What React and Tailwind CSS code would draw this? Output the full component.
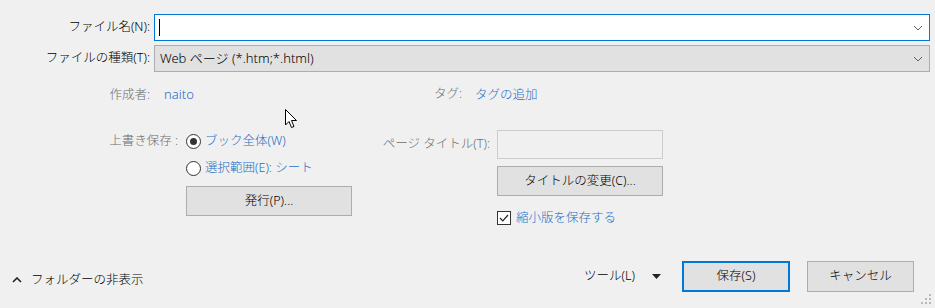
import React from 'react';

const font = "font-['Noto_Sans','Noto_Sans_CJK_JP',sans-serif] font-light";

function Chevron() {
  return (
    <svg width="10" height="6" viewBox="0 0 10 6" className="shrink-0">
      <path d="M1 1 L5 5 L9 1" fill="none" stroke="#606060" strokeWidth="1" />
    </svg>
  );
}

function Radio({ checked }) {
  return (
    <span className="w-[15px] h-[15px] rounded-full border border-[#333] bg-white flex items-center justify-center shrink-0">
      {checked && <span className="w-[7px] h-[7px] rounded-full bg-[#333]" />}
    </span>
  );
}

function Checkbox() {
  return (
    <span className="w-[14px] h-[14px] border border-[#333] bg-white flex items-center justify-center shrink-0">
      <svg width="10" height="8" viewBox="0 0 10 8">
        <path d="M1 4 L3.8 6.8 L9 1" fill="none" stroke="#222" strokeWidth="1.2" />
      </svg>
    </span>
  );
}

function Button({ children, className = '' }) {
  return (
    <div className={`bg-[#e1e1e1] border border-[#adadad] flex items-center justify-center text-black ${className}`}>
      {children}
    </div>
  );
}

export default function App() {
  return (
    <div className={`relative w-[935px] h-[308px] bg-[#f0f0f0] overflow-hidden flex flex-col text-[12.5px] text-black ${font}`}>
      {/* file name / type */}
      <div className="pt-[14px] pr-[5px] grid grid-cols-[150px_1fr] gap-x-[4px] gap-y-[4px] items-center">
        <div className="text-right">ファイル名(N):</div>
        <div className="h-[27px] bg-white border border-[#0078d7] flex items-center pl-[4px] pr-[6px]">
          <span className="w-px h-[17px] bg-black" />
          <span className="flex-1" />
          <Chevron />
        </div>
        <div className="text-right">ファイルの種類(T):</div>
        <div className="h-[27px] bg-[#e1e1e1] border border-[#adadad] flex items-center pl-[5px] pr-[6px]">
          <span className="flex-1 text-[13px]">Web ページ (*.htm;*.html)</span>
          <Chevron />
        </div>
      </div>

      {/* author / tag */}
      <div className="mt-[14px] h-[18px] flex items-center">
        <div className="w-[150px] text-right text-[#6d6d6d]">作成者:</div>
        <div className="ml-[14px] w-[298px] flex">
          <span className="text-[#1f6fc5] text-[13px]">naito</span>
          <span className="ml-auto text-[#6d6d6d]">タグ:</span>
        </div>
        <div className="ml-[13px] text-[#1f6fc5]">タグの追加</div>
      </div>

      {/* options */}
      <div className="mt-[26px] flex">
        <div className="w-[387px] flex">
          <div className="w-[178px] h-[22px] flex items-center justify-end text-[#6d6d6d]">上書き保存 :</div>
          <div className="ml-[8px] flex flex-col">
            <div className="h-[22px] flex items-center gap-[4px]">
              <Radio checked />
              <span className="text-[#1f6fc5]">ブック全体(W)</span>
            </div>
            <div className="mt-[5px] h-[22px] flex items-center gap-[4px]">
              <Radio />
              <span className="text-[#1f6fc5]">選択範囲(E): シート</span>
            </div>
            <Button className="mt-[7px] w-[166px] h-[30px]">発行(P)...</Button>
          </div>
        </div>
        <div className="flex">
          <div className="w-[103px] h-[29px] flex items-center justify-end text-[#6d6d6d] whitespace-nowrap">ページ タイトル(T):</div>
          <div className="ml-[7px] flex flex-col">
            <div className="w-[166px] h-[29px] border border-[#cccccc] bg-[#f0f0f0]" />
            <Button className="mt-[7px] w-[166px] h-[30px]">タイトルの変更(C)...</Button>
            <div className="mt-[13px] h-[18px] flex items-center gap-[5px]">
              <Checkbox />
              <span className="text-[#1f6fc5]">縮小版を保存する</span>
            </div>
          </div>
        </div>
      </div>

      {/* bottom bar */}
      <div className="mt-auto mb-[16px] flex items-center">
        <div className="ml-[12px] mt-[7px] flex items-center gap-[9px]">
          <svg width="10" height="6" viewBox="0 0 10 6">
            <path d="M1 5 L5 1 L9 5" fill="none" stroke="#222" strokeWidth="1.6" />
          </svg>
          <span>フォルダーの非表示</span>
        </div>
        <div className="ml-auto flex items-center">
          <span>ツール(L)</span>
          <svg width="9" height="5" viewBox="0 0 9 5" className="ml-[17px]">
            <path d="M0 0 L9 0 L4.5 5 Z" fill="#222" />
          </svg>
          <Button className="ml-[21px] w-[108px] h-[31px] !border-2 !border-[#0078d7]">保存(S)</Button>
          <Button className="ml-[17px] w-[107px] h-[31px]">キャンセル</Button>
          <div className="w-[21px]" />
        </div>
      </div>

      {/* resize grip */}
      <svg width="12" height="12" viewBox="0 0 12 12" className="absolute right-[3px] bottom-[3px]">
        {[[9, 1], [9, 5], [5, 5], [9, 9], [5, 9], [1, 9]].map(([x, y], i) => (
          <rect key={i} x={x} y={y} width="2" height="2" fill="#b8b8b8" />
        ))}
      </svg>

      {/* mouse cursor */}
      <svg width="14" height="21" viewBox="0 0 14 21" className="absolute left-[285px] top-[109px]">
        <path d="M0.5 0.5 L0.5 16 L4 12.5 L6.5 18.5 L9 17.5 L6.5 11.5 L11.5 11.5 Z" fill="white" stroke="black" strokeWidth="1" strokeLinejoin="round" />
      </svg>
    </div>
  );
}
